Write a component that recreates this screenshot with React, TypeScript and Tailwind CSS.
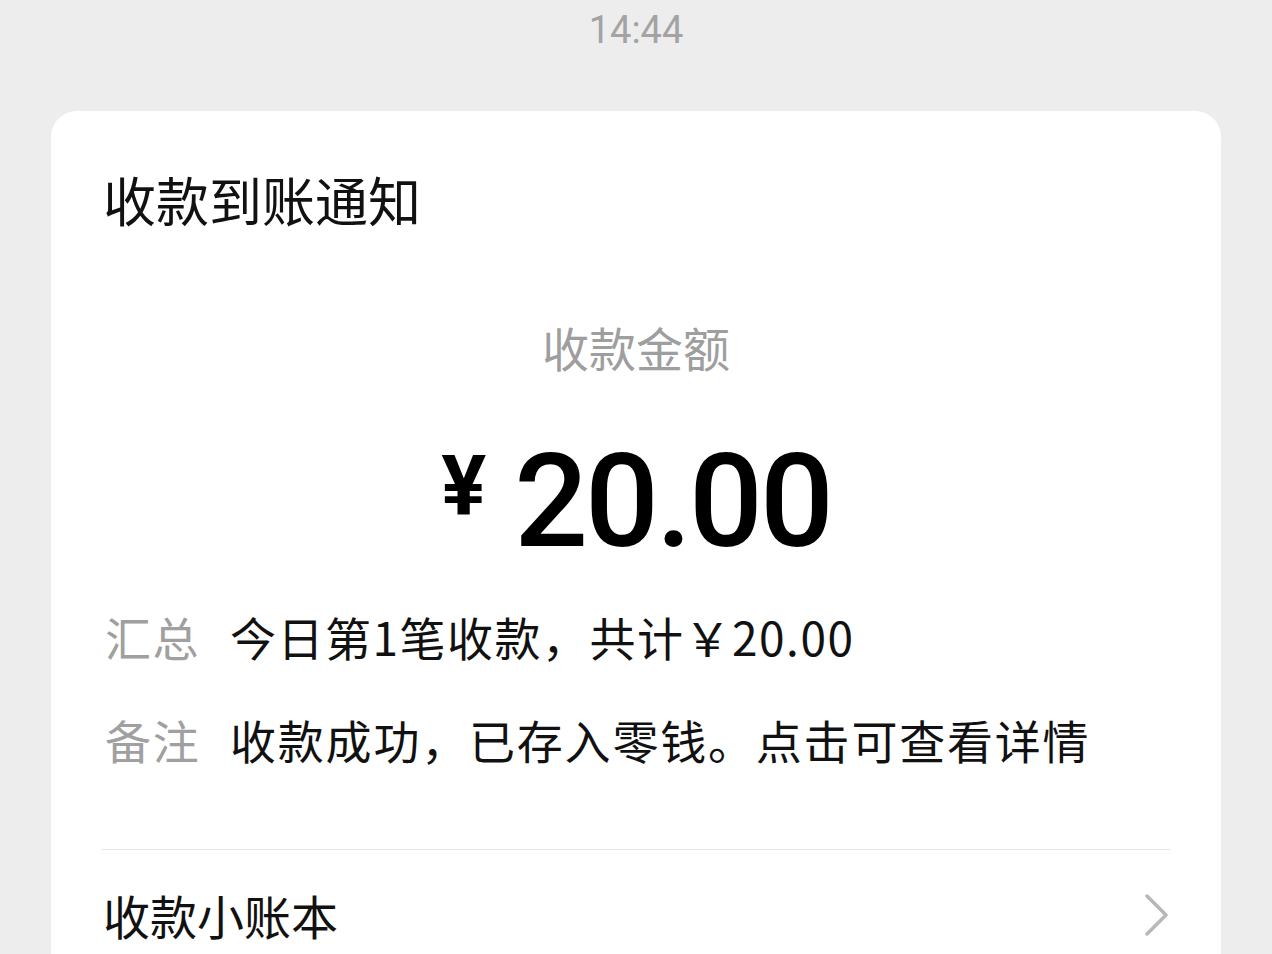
export default function App() {
  const cjk = { fontFamily: '"Noto Sans CJK SC", "Noto Sans", sans-serif' };
  return (
    <div className="min-h-[954px] w-full bg-[#ededed] overflow-hidden" style={cjk}>
      {/* status time */}
      <div className="flex justify-center pt-[5px] h-[111px]">
        <span className="text-[38px] leading-[50px] text-[#a3a3a3]" style={{ fontFamily: 'Roboto, "Noto Sans", sans-serif' }}>
          14:44
        </span>
      </div>

      <div className="mx-[51px] bg-white rounded-t-[26px] px-[54px] pt-[56px] pb-[40px]">
        <div className="text-[53px] leading-[64px] text-[#111] -ml-[2px]">收款到账通知</div>

        <div className="mt-[85px] text-center text-[47px] leading-[61px] text-[#9e9e9e]">收款金额</div>

        <div className="mt-[60px] flex items-start justify-center text-black" style={{ fontFamily: 'Roboto, sans-serif' }}>
          <span className="text-[84px] leading-none font-bold mt-[8px] mr-[28px]">¥</span>
          <span className="text-[130px] leading-none font-medium tracking-[-3px]">20.00</span>
        </div>

        <div className="mt-[40px] flex flex-col gap-[44px]">
          <div className="flex text-[46px] leading-[59px] tracking-[1.5px]">
            <span className="w-[125px] shrink-0 text-[#a0a0a0]">汇总</span>
            <span className="text-[#111]">今日第1笔收款，共计￥20.00</span>
          </div>
          <div className="flex text-[46px] leading-[59px] tracking-[1.8px]">
            <span className="w-[125px] shrink-0 text-[#a0a0a0]">备注</span>
            <span className="text-[#111]">收款成功，已存入零钱。点击可查看详情</span>
          </div>
        </div>

        <div className="mt-[80px] -mx-[3px] border-t border-[#e6e6e6]" />

        <div className="pt-[34px] flex items-center justify-between">
          <span className="text-[47px] leading-[61px] text-[#111] -ml-[2px]">收款小账本</span>
          <svg width="26" height="44" viewBox="0 0 26 44" fill="none" className="mr-[-1px]">
            <path d="M5 3 L24 22 L5 41" stroke="#b8b8b8" strokeWidth="3.5" strokeLinecap="round" strokeLinejoin="round" />
          </svg>
        </div>
      </div>
    </div>
  );
}
